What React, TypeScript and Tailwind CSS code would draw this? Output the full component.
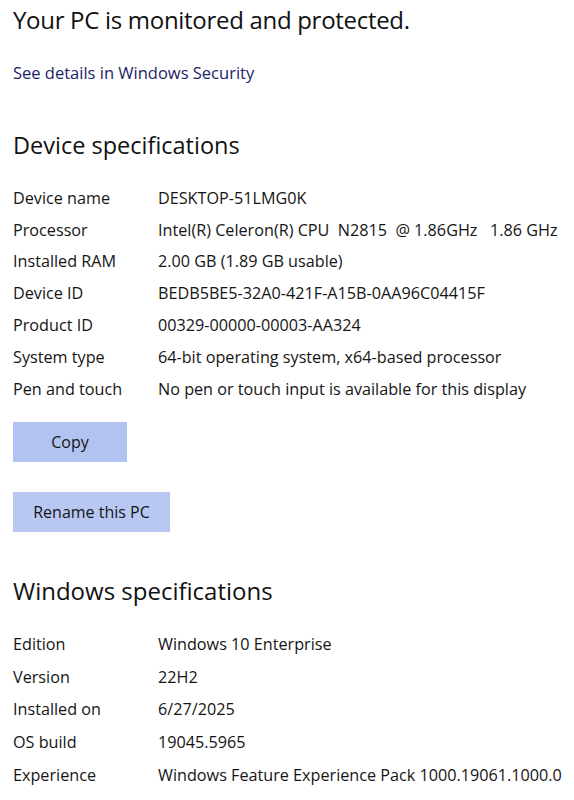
const deviceSpecs: [string, string][] = [
  ['Device name', 'DESKTOP-51LMG0K'],
  ['Processor', 'Intel(R) Celeron(R) CPU  N2815  @ 1.86GHz   1.86 GHz'],
  ['Installed RAM', '2.00 GB (1.89 GB usable)'],
  ['Device ID', 'BEDB5BE5-32A0-421F-A15B-0AA96C04415F'],
  ['Product ID', '00329-00000-00003-AA324'],
  ['System type', '64-bit operating system, x64-based processor'],
  ['Pen and touch', 'No pen or touch input is available for this display'],
];

const windowsSpecs: [string, string][] = [
  ['Edition', 'Windows 10 Enterprise'],
  ['Version', '22H2'],
  ['Installed on', '6/27/2025'],
  ['OS build', '19045.5965'],
  ['Experience', 'Windows Feature Experience Pack 1000.19061.1000.0'],
];

function SpecRows({ rows, rowHeight }: { rows: [string, string][]; rowHeight: string }) {
  return (
    <div className="flex flex-col">
      {rows.map(([label, value]) => (
        <div key={label} className={`flex ${rowHeight} items-center text-[16.2px] text-[#151515]`}>
          <span className="w-[145px] shrink-0">{label}</span>
          <span className="whitespace-pre">{value}</span>
        </div>
      ))}
    </div>
  );
}

export default function App() {
  return (
    <div className="min-h-[800px] w-[574px] overflow-hidden bg-white pl-[13px] font-['Open_Sans',sans-serif] text-[#111]">
      <h1 className="pt-[3px] text-[24px] leading-[34px] tracking-[-0.3px]">Your PC is monitored and protected.</h1>

      <a className="mt-[24px] block text-[16.5px] leading-[24px] text-[#1c2466]">See details in Windows Security</a>

      <h2 className="mt-[44px] text-[23.5px] leading-[32px]">Device specifications</h2>

      <div className="mt-[21px]">
        <SpecRows rows={deviceSpecs} rowHeight="h-[31.8px]" />
      </div>

      <button className="mt-[17px] block h-[40px] w-[114px] bg-[#b3c3f1] text-[16px] text-[#151515]">Copy</button>

      <button className="mt-[30px] block h-[40px] w-[157px] bg-[#b8c8f3] text-[16px] text-[#151515]">Rename this PC</button>

      <h2 className="mt-[42px] text-[24px] leading-[34px]">Windows specifications</h2>

      <div className="mt-[20px]">
        <SpecRows rows={windowsSpecs} rowHeight="h-[32.8px]" />
      </div>
    </div>
  );
}
